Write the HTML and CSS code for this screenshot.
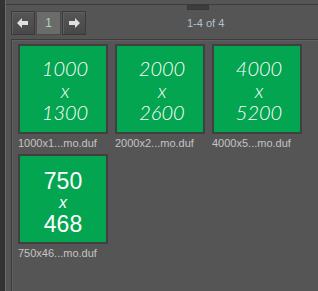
FILE: index.html
```html
<!DOCTYPE html>
<html>
<head>
<meta charset="utf-8">
<link rel="stylesheet" href="styles.css">
</head>
<body>
<div class="app">
  <div class="edge"></div>
  <div class="main">
    <div class="topstrip"><span class="grip"></span></div>
    <div class="toolbar">
      <div class="pager">
        <button class="btn"><svg width="12" height="10" viewBox="0 0 12 10"><path d="M0 5 L5 0 L5 3 L11 3 L11 7 L5 7 L5 10 Z" fill="#e0e0e0"/></svg></button>
        <button class="btn page">1</button>
        <button class="btn"><svg width="12" height="10" viewBox="0 0 12 10"><path d="M12 5 L7 0 L7 3 L1 3 L1 7 L7 7 L7 10 Z" fill="#e0e0e0"/></svg></button>
      </div>
      <div class="count">1-4 of 4</div>
    </div>
    <div class="panel">
      <div class="grid">
        <div class="item">
          <div class="thumb script"><span>1000</span><span class="x">x</span><span>1300</span></div>
          <div class="label">1000x1...mo.duf</div>
        </div>
        <div class="item">
          <div class="thumb script"><span>2000</span><span class="x">x</span><span>2600</span></div>
          <div class="label">2000x2...mo.duf</div>
        </div>
        <div class="item">
          <div class="thumb script"><span>4000</span><span class="x">x</span><span>5200</span></div>
          <div class="label">4000x5...mo.duf</div>
        </div>
        <div class="item">
          <div class="thumb plain"><span class="n">750</span><span class="x">x</span><span class="n">468</span></div>
          <div class="label">750x46...mo.duf</div>
        </div>
      </div>
    </div>
  </div>
</div>
</body>
</html>
```
FILE: styles.css
```css
html, body {
  margin: 0;
  padding: 0;
  background: #555555;
  font-family: "Liberation Sans", Arial, sans-serif;
}
.app {
  display: flex;
  width: 318px;
  height: 291px;
  overflow: hidden;
}
.edge {
  width: 5px;
  background: #333333;
  border-right: 1px solid #6a6a6a;
  flex: none;
}
.main {
  flex: 1;
  display: flex;
  flex-direction: column;
}
.topstrip {
  height: 4px;
  border-bottom: 1px solid #3c3c3c;
  position: relative;
}
.grip {
  position: absolute;
  left: 181px;
  top: 5px;
  width: 20px;
  height: 3px;
  background: #3e3e3e;
  border: 1px solid #383838;
}
.toolbar {
  height: 34px;
  display: flex;
  align-items: center;
  padding: 0 0 0 5px;
}
.pager {
  display: flex;
  gap: 1px;
  margin-top: 2px;
}
.btn {
  width: 24px;
  height: 24px;
  padding: 0;
  margin: 0;
  border: 1px solid #3a3a3a;
  background: linear-gradient(#565656, #484848);
  box-shadow: inset 1px 1px 0 #606060;
  display: flex;
  align-items: center;
  justify-content: center;
  font-family: "Liberation Sans", Arial, sans-serif;
}
.btn.page {
  width: 25px;
  background: #6b6b6b;
  box-shadow: none;
  border-color: #4a4a4a;
  color: #a8d8c0;
  font-size: 12px;
}
.count {
  margin-left: 101px;
  margin-top: 2px;
  color: #b4c0cc;
  font-size: 11px;
}
.panel {
  flex: 1;
  margin-left: 5px;
  border-top: 1px solid #3c3c3c;
  border-left: 1px solid #3c3c3c;
  box-shadow: inset 1px 1px 0 #606060;
}
.grid {
  display: grid;
  grid-template-columns: repeat(3, 90px);
  column-gap: 7px;
  row-gap: 0;
  padding: 4px 0 0 6px;
}
.item {
  height: 110px;
}
.thumb {
  box-sizing: border-box;
  width: 90px;
  height: 90px;
  border: 2px solid #404040;
  background: #03a550;
  color: #ffffff;
  display: flex;
  flex-direction: column;
  align-items: center;
  justify-content: center;
}
.thumb.script {
  font-family: Lato, "DejaVu Sans", sans-serif;
  font-weight: 300;
  font-style: italic;
  font-size: 20px;
  line-height: 22px;
  padding-top: 2px;
  padding-left: 4px;
}
.thumb.plain {
  font-family: "Liberation Sans", Arial, sans-serif;
  font-size: 23px;
  padding-top: 6px;
}
.thumb.plain .n {
  line-height: 26px;
}
.thumb.plain .x {
  font-style: italic;
  font-size: 16px;
  line-height: 17px;
}
.label {
  margin-top: 3px;
  color: #c4c4c4;
  font-size: 11px;
  line-height: 12px;
  white-space: nowrap;
}
```
